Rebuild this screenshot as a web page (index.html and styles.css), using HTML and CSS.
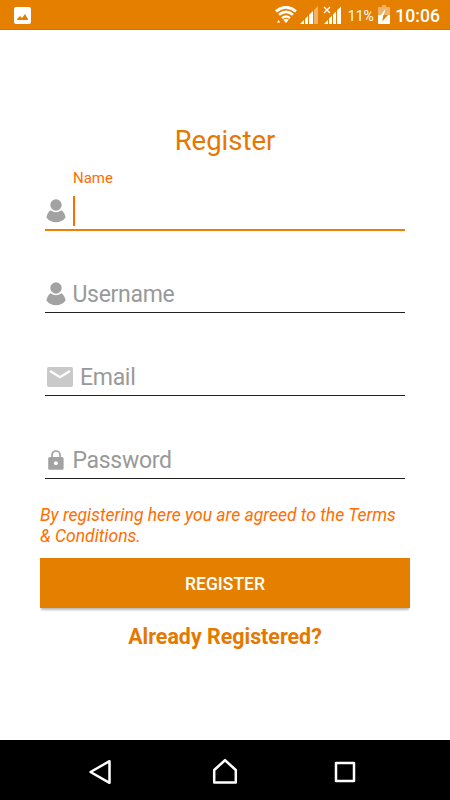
FILE: index.html
```
<!DOCTYPE html>
<html lang="en">
<head>
  <meta charset="UTF-8" />
  <meta name="viewport" content="width=device-width, initial-scale=1.0" />
  <title>Register</title>
  <link rel="stylesheet" href="styles.css">
</head>
<body>
  <header class="status-bar">
    <svg class="photo-icon" width="17" height="17" viewBox="0 0 17 17">
      <rect width="17" height="17" rx="2" fill="#fff" />
      <path d="M3 13v-1l3-3 2 2 3-4 3 5v1z" fill="#e57f00" />
    </svg>
    <div class="status-right">
      <svg class="wifi-icon" width="22" height="18" viewBox="0 0 22 18" fill="none" stroke="#fff">
        <path d="M1 5.3Q11-2.7 21 5.3" stroke-width="2.8" />
        <path d="M4 8.8Q11 2.9 18 8.8" stroke-width="2.6" />
        <path d="M7 12.2Q11 8.8 15 12.2" stroke-width="2.4" />
        <path d="M8.2 13.8Q11 11.6 13.8 13.8L11 17z" fill="#fff" stroke="none" />
        <path d="M2 16.5L3.6 14l1.6 2.5z" fill="#fff" stroke="none" />
      </svg>
      <svg class="signal-icon" width="18" height="18" viewBox="0 0 18 18" fill="#fff">
        <path d="M0 18l4-4v4zM5 18v-5l3-3v8zM9 18V9l4-4v13z" />
        <path d="M14 18V4l4-4v18z" opacity=".4" />
      </svg>
      <svg class="signal-icon second" width="19" height="19" viewBox="0 0 19 19" fill="#fff">
        <path d="M1 19l4-4v4zM6 19v-5.5l3-3V19zM10 19V9.5l3-3V19zM14 19V5.5l4-4V19z" />
        <path d="M1 2l6 6M7 2L1 8" stroke="#fff" stroke-width="1.3" />
      </svg>
      <span class="percent">11%</span>
      <svg class="battery-icon" width="12" height="19" viewBox="0 0 12 19">
        <path d="M4 0h4v2h3q1 0 1 1v7H0V3q0-1 1-1h3z" fill="#fff" opacity=".4" />
        <path d="M0 10h12v8q0 1-1 1H1q-1 0-1-1z" fill="#fff" />
        <path d="M7.5 4L2 11h3.4z" fill="#fff" />
        <path d="M5.4 10H10L4.2 16.5z" fill="#e57f00" />
      </svg>
      <span class="clock">10:06</span>
    </div>
  </header>

  <main class="container">
    <h1>Register</h1>
    <form id="registerForm">
      <label class="float-label" for="name">Name</label>
      <div class="field active">
        <svg class="field-icon" width="20" height="24" viewBox="0 0 20 24" fill="#a2a2a2">
          <circle cx="10" cy="6" r="5.7" />
          <path d="M4.6 11.2Q10 15.3 15.4 11.2Q18.8 13.6 19.6 18.5Q16 23.3 10 23.3T.4 18.5Q1.2 13.6 4.6 11.2z" />
        </svg>
        <span class="caret"></span>
        <input type="text" id="name" />
      </div>

      <div class="field">
        <svg class="field-icon" width="20" height="24" viewBox="0 0 20 24" fill="#a2a2a2">
          <circle cx="10" cy="6" r="5.7" />
          <path d="M4.6 11.2Q10 15.3 15.4 11.2Q18.8 13.6 19.6 18.5Q16 23.3 10 23.3T.4 18.5Q1.2 13.6 4.6 11.2z" />
        </svg>
        <input type="text" id="username" placeholder="Username" />
      </div>

      <div class="field">
        <svg class="field-icon wide" width="26" height="20" viewBox="0 0 26 20">
          <rect width="26" height="20" rx="2" fill="#c9c9c9" />
          <path d="M3 4l10 6.2L23 4" fill="none" stroke="#fff" stroke-width="2.4" />
        </svg>
        <input type="text" id="email" placeholder="Email" />
      </div>

      <div class="field">
        <svg class="field-icon" width="20" height="20" viewBox="0 0 20 20">
          <path d="M6 7.5V5a4 4 0 0 1 8 0v2.5" fill="none" stroke="#a2a2a2" stroke-width="1.7" />
          <rect x="2.2" y="7" width="15.4" height="12.8" rx="1.6" fill="#a2a2a2" />
          <circle cx="9.9" cy="13.2" r="2" fill="#fff" />
        </svg>
        <input type="password" id="password" placeholder="Password" />
      </div>

      <p class="terms">By registering here you are agreed to the Terms &amp; Conditions.</p>
      <button type="submit">REGISTER</button>
    </form>
    <a class="login-link">Already Registered?</a>
  </main>

  <nav class="nav-bar">
    <svg width="24" height="26" viewBox="0 0 24 26"><path d="M21.5 2.2v21.6L2.5 13z" /></svg>
    <svg class="home-icon" width="26" height="26" viewBox="0 0 26 26"><path d="M2.2 23.5V11L13 1.2 23.8 11v12.5z" /></svg>
    <svg width="22" height="22" viewBox="0 0 22 22"><path d="M2 2h18v18H2z" /></svg>
  </nav>
</body>
</html>
```
FILE: styles.css
```
* {
  box-sizing: border-box;
}
body {
  font-family: Roboto, sans-serif;
  background-color: #fff;
  margin: 0;
  height: 100vh;
  display: flex;
  flex-direction: column;
  overflow: hidden;
}
svg {
  display: block;
  flex: none;
}
.status-bar {
  height: 30px;
  flex: none;
  display: flex;
  justify-content: space-between;
  padding: 0 10px 0 14px;
  background-color: #e57f00;
  border-bottom: 1px solid #dc7000;
  color: #fff;
}
.photo-icon {
  margin-top: 7px;
}
.status-right {
  display: flex;
  align-items: flex-start;
}
.wifi-icon {
  margin-top: 6px;
}
.signal-icon {
  margin: 6px 0 0 3px;
}
.signal-icon.second {
  margin: 5px 0 0 5px;
}
.percent {
  margin-left: 6px;
  font-size: 14px;
  line-height: 32px;
}
.battery-icon {
  margin: 5px 0 0 4px;
}
.clock {
  margin-left: 5.5px;
  font-size: 17.6px;
  font-weight: 500;
  line-height: 32px;
}
.container {
  flex: 1;
  padding: 91px 40px 0;
  text-align: center;
}
h1 {
  margin: 0;
  font-size: 27.5px;
  font-weight: 400;
  line-height: 40px;
  color: #e57800;
}
.float-label {
  display: block;
  height: 31px;
  padding: 7px 0 0 33px;
  text-align: left;
  font-size: 15px;
  line-height: 20px;
  color: #ff6d00;
}
.field {
  display: flex;
  align-items: center;
  height: 38px;
  margin: 0 5px 45px;
  padding-left: 1px;
  border-bottom: 1px solid #222;
}
.field.active {
  height: 39px;
  margin-bottom: 44px;
  border-bottom: 2px solid #f57c00;
}
.field-icon {
  margin: 1px 6.5px 0 0;
}
.field-icon.wide {
  margin: 0 7px 0 1px;
}
.caret {
  width: 2px;
  height: 30px;
  background-color: #ff6d00;
}
input {
  flex: 1;
  min-width: 0;
  height: 37px;
  padding: 2px 0 0;
  border: none;
  outline: none;
  background: none;
  font-family: inherit;
  font-size: 23px;
  letter-spacing: -0.3px;
  color: #222;
}
input::placeholder {
  color: #999;
}
.terms {
  margin: -20px 0 12px;
  padding-top: 1px;
  text-align: left;
  font-size: 17.55px;
  font-style: italic;
  line-height: 20.5px;
  color: #ff6d00;
}
button {
  display: block;
  width: 100%;
  height: 50px;
  padding: 2px 0 0;
  border: none;
  background-color: #e57f00;
  box-shadow: 0 3px 2px -1px #bbb;
  color: #fff;
  font-family: inherit;
  font-size: 17.5px;
  font-weight: 500;
}
.login-link {
  display: block;
  margin-top: 15px;
  font-size: 21.4px;
  font-weight: 700;
  line-height: 28px;
  color: #e57800;
}
.nav-bar {
  height: 60px;
  flex: none;
  display: flex;
  justify-content: space-between;
  align-items: center;
  padding: 4px 94px 0 88px;
  background-color: #000;
}
.nav-bar path {
  fill: none;
  stroke: #fff;
  stroke-width: 2.5;
  stroke-linejoin: round;
}
.home-icon {
  margin-left: 4px;
}
```
